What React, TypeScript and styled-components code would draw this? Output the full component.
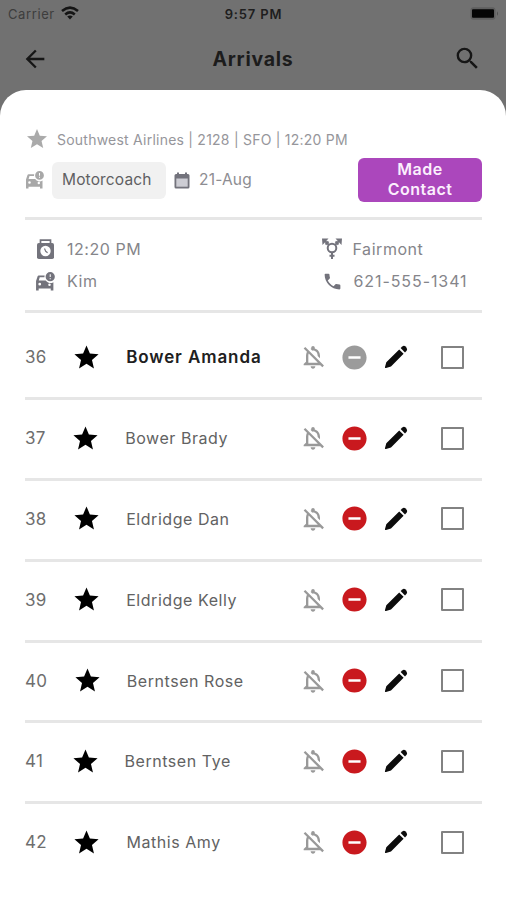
import React from "react";
import styled, { createGlobalStyle } from "styled-components";
import {
  MdArrowBack, MdSearch, MdStar, MdOutlineNotificationsOff, MdRemoveCircle, MdPhone,
} from "react-icons/md";

const Global = createGlobalStyle`
  * { box-sizing: border-box; }
  body { margin: 0; background: #717171; font-family: Inter, "Liberation Sans", sans-serif; }
`;

const Screen = styled.div`
  width: 506px;
  height: 900px;
  overflow: hidden;
  display: flex;
  flex-direction: column;
  background: #717171;
`;

const StatusBar = styled.div`
  height: 27px;
  padding: 0 7px 0 8px;
  display: grid;
  grid-template-columns: 1fr auto 1fr;
  align-items: center;
  font-size: 13px;
`;

const Carrier = styled.div`
  display: flex;
  align-items: center;
  gap: 6px;
  color: #3d3d3d;
  letter-spacing: 0.6px;
  svg { color: #151515; margin-top: -2px; }
`;

const Clock = styled.div`
  color: #1e1e1e;
  font-weight: 600;
  letter-spacing: 0.85px;
`;

const BatterySlot = styled.div`
  display: flex;
  justify-content: flex-end;
`;

const NavBar = styled.header`
  height: 63px;
  padding: 0 24px 0 21px;
  display: grid;
  grid-template-columns: 1fr auto 1fr;
  align-items: center;
  color: #161616;
  > svg:last-child { justify-self: end; }
`;

const Title = styled.h1`
  margin: 1px 0 0 3px;
  font-size: 19.5px;
  font-weight: 700;
  letter-spacing: 0.75px;
  color: #1c1c1c;
`;

const Sheet = styled.main`
  flex: 1;
  padding: 0 24px 0 25px;
  border-radius: 26px 26px 0 0;
  background: #fff;
`;

const Flight = styled.section`
  height: 130px;
  padding-top: 38px;
  border-bottom: 3px solid #e6e6e6;
`;

const FlightLine = styled.div`
  height: 22px;
  display: flex;
  align-items: center;
  gap: 8px;
  color: #96969b;
  font-size: 14px;
  letter-spacing: 0.23px;
  white-space: nowrap;
  svg { color: #aaa; }
`;

const VehicleLine = styled.div`
  height: 44px;
  margin-top: 8px;
  display: flex;
  align-items: center;
`;

const Chip = styled.span`
  width: 114px;
  height: 37px;
  margin: 0 8px 0 7px;
  padding-left: 10px;
  border-radius: 6px;
  background: #f1f1f1;
  color: #5f5f62;
  font-size: 15.5px;
  line-height: 36px;
  letter-spacing: 0.15px;
`;

const DateText = styled.span`
  margin: -2px 0 0 9px;
  color: #8d8d92;
  font-size: 15.5px;
  letter-spacing: 0.2px;
`;

const ContactButton = styled.button`
  width: 124px;
  height: 44px;
  margin-left: auto;
  padding: 0 0 2px;
  border: 0;
  border-radius: 6px;
  background: #ab47bc;
  color: #fbeffd;
  font: 600 16px/20.5px Inter, sans-serif;
  letter-spacing: 0.5px;
`;

const Details = styled.section`
  height: 93px;
  padding: 13px 0 0 10px;
  display: grid;
  grid-template-columns: 286.5px 1fr;
  grid-template-rows: 32px 32px;
  border-bottom: 3px solid #e6e6e6;
`;

const Detail = styled.div<{ $spacing?: number }>`
  display: flex;
  align-items: center;
  gap: 11px;
  color: #85858a;
  font-size: 16px;
  letter-spacing: ${(p) => p.$spacing ?? 0.55}px;
  white-space: nowrap;
  svg { color: #73737c; flex: none; }
`;

const Row = styled.div`
  height: 80.8px;
  padding-bottom: 2px;
  display: flex;
  align-items: center;
  border-bottom: 3px solid #e6e6e6;
  &:first-child { height: 87.3px; padding-top: 6px; }
  &:last-child { border-bottom-color: transparent; }
`;

const Lead = styled.div`
  width: 273.5px;
  display: flex;
  align-items: center;
  svg { flex: none; }
`;

const Num = styled.span`
  min-width: 20px;
  margin-right: 25.5px;
  color: #6e6e6e;
  font-size: 17px;
  letter-spacing: 0.3px;
`;

const Name = styled.span<{ $bold?: boolean }>`
  margin-left: 25px;
  color: ${(p) => (p.$bold ? "#202020" : "#626262")};
  font-size: ${(p) => (p.$bold ? "17px" : "16px")};
  font-weight: ${(p) => (p.$bold ? 600 : 400)};
  letter-spacing: ${(p) => (p.$bold ? "0.9px" : "0.55px")};
  white-space: nowrap;
`;

const Actions = styled.div`
  display: flex;
  align-items: center;
  svg { flex: none; }
`;

const BellIcon = styled(MdOutlineNotificationsOff)`
  color: #999;
`;

const StatusIcon = styled(MdRemoveCircle)<{ $muted?: boolean }>`
  margin-left: 13px;
  color: ${(p) => (p.$muted ? "#9b9b9b" : "#c9191e")};
`;

const Box = styled.span`
  width: 23px;
  height: 23px;
  margin-left: 33px;
  border: 2px solid #828282;
  border-radius: 1px;
`;

const PencilSvg = styled.svg`
  margin-left: 15.5px;
`;

const Pencil = () => (
  <PencilSvg width="24" height="24" viewBox="0 0 24 24" fill="#0c0c0c">
    <path d="M15.2 4.4L19.6 8.8L7 21.5L2 23Q0.6 23.4 1 22L2.3 17.2Z" />
    <path d="M16.6 3L18.3 1.4Q20 0.2 21.6 1.6L22.4 2.4Q23.8 4 22.6 5.7L21 7.4Z" />
  </PencilSvg>
);

const Wifi = () => (
  <svg width="18" height="14" viewBox="0 0 18 14" fill="none" stroke="currentColor" strokeWidth="2.6">
    <path d="M1 5 Q9 -1.6 17 5" />
    <path d="M4.2 8.4 Q9 4.4 13.8 8.4" />
    <path d="M9 13.5 L6.2 10.6 Q9 8.6 11.8 10.6 Z" fill="currentColor" stroke="none" />
  </svg>
);

const Battery = () => (
  <svg width="29" height="14" viewBox="0 0 29 14">
    <rect x="0.5" y="0.2" width="25" height="12.5" rx="3" fill="#5f5f5f" />
    <rect x="2" y="2.3" width="22" height="8.4" rx="1" fill="#050505" />
    <path d="M27 4.2 Q29 6.7 27 8.7Z" fill="#505050" />
  </svg>
);

const CarBadge = ({ size = 20, color = "#73737c" }: { size?: number; color?: string }) => (
  <svg width={size} height={size} viewBox="0 0 20 20" fill={color}>
    <path fillRule="evenodd" d="M3.5 4.2H9.2A5.2 5.2 0 0 0 9 6H4.5L3.6 9H10.2A5.2 5.2 0 0 0 17.5 10.6V18.5H15V16.7H3.5V18.5H1V9.5L2.5 5Q2.8 4.2 3.5 4.2ZM4.5 11.2A1.3 1.3 0 1 0 4.5 13.8A1.3 1.3 0 1 0 4.5 11.2ZM13.8 11.8A1.2 1.2 0 1 0 13.8 14.2A1.2 1.2 0 1 0 13.8 11.8Z" />
    <path fillRule="evenodd" d="M14.5 1A4.4 4.4 0 1 0 14.5 9.8A4.4 4.4 0 1 0 14.5 1ZM14 3H15V5.8H14ZM14 6.8H15V7.8H14Z" />
  </svg>
);

const TimeIcon = () => (
  <svg width="21" height="22" viewBox="0 0 21 22" fill="none" stroke="#73737c">
    <path d="M5.5 6V2.2H15.5V6" strokeWidth="1.7" />
    <rect x="2" y="5" width="17" height="16" rx="1.8" fill="#73737c" stroke="none" />
    <circle cx="10.5" cy="13" r="5.2" fill="#fff" stroke="none" />
    <path d="M9.5 10.5L10.7 13.3L12.6 14.8" strokeWidth="1.1" />
  </svg>
);

const PlaceIcon = () => (
  <svg width="20" height="22" viewBox="0 0 20 22" fill="none" stroke="#73737c" strokeWidth="2">
    <circle cx="10" cy="10" r="4.3" />
    <path d="M7 7L2 2M13 7L18 2M10 14V21M7.5 17.8H12.5M3.5 6.5L6.5 3.5M13.5 3.5L16.5 6.5" />
    <path d="M0 0.5H6.5L0.5 7ZM20 0.5H13.5L19.5 7Z" fill="#73737c" stroke="none" />
  </svg>
);

const CalendarIcon = () => (
  <svg width="16" height="17" viewBox="0 0 16 17">
    <path d="M3 0.5H5V2H11V0.5H13V2H14Q15.5 2 15.5 3.5V15Q15.5 16.5 14 16.5H2Q0.5 16.5 0.5 15V3.5Q0.5 2 2 2H3Z" fill="#73737c" />
    <path d="M2.3 6.5H13.7V14.7H2.3Z" fill="#cdcdd4" />
  </svg>
);

const guests = [
  { id: 36, name: "Bower Amanda", lead: true },
  { id: 37, name: "Bower Brady" },
  { id: 38, name: "Eldridge Dan" },
  { id: 39, name: "Eldridge Kelly" },
  { id: 40, name: "Berntsen Rose" },
  { id: 41, name: "Berntsen Tye" },
  { id: 42, name: "Mathis Amy" },
];

export default function App() {
  return (
    <Screen>
      <Global />
      <StatusBar>
        <Carrier>Carrier <Wifi /></Carrier>
        <Clock>9:57 PM</Clock>
        <BatterySlot><Battery /></BatterySlot>
      </StatusBar>
      <NavBar>
        <MdArrowBack size={28} />
        <Title>Arrivals</Title>
        <MdSearch size={29} />
      </NavBar>
      <Sheet>
        <Flight>
          <FlightLine>
            <MdStar size={24} />
            <span>Southwest Airlines | 2128 | SFO | 12:20 PM</span>
          </FlightLine>
          <VehicleLine>
            <CarBadge color="#a8a8a8" />
            <Chip>Motorcoach</Chip>
            <CalendarIcon />
            <DateText>21-Aug</DateText>
            <ContactButton>Made<br />Contact</ContactButton>
          </VehicleLine>
        </Flight>
        <Details>
          <Detail><TimeIcon />12:20 PM</Detail>
          <Detail><PlaceIcon />Fairmont</Detail>
          <Detail><CarBadge size={21} />Kim</Detail>
          <Detail $spacing={0.92}><MdPhone size={21} />621-555-1341</Detail>
        </Details>
        <div>
          {guests.map((g) => (
            <Row key={g.id}>
              <Lead>
                <Num>{g.id}</Num>
                <MdStar size={29} />
                <Name $bold={g.lead}>{g.name}</Name>
              </Lead>
              <Actions>
                <BellIcon size={28} />
                <StatusIcon size={29} $muted={g.lead} />
                <Pencil />
                <Box />
              </Actions>
            </Row>
          ))}
        </div>
      </Sheet>
    </Screen>
  );
}
